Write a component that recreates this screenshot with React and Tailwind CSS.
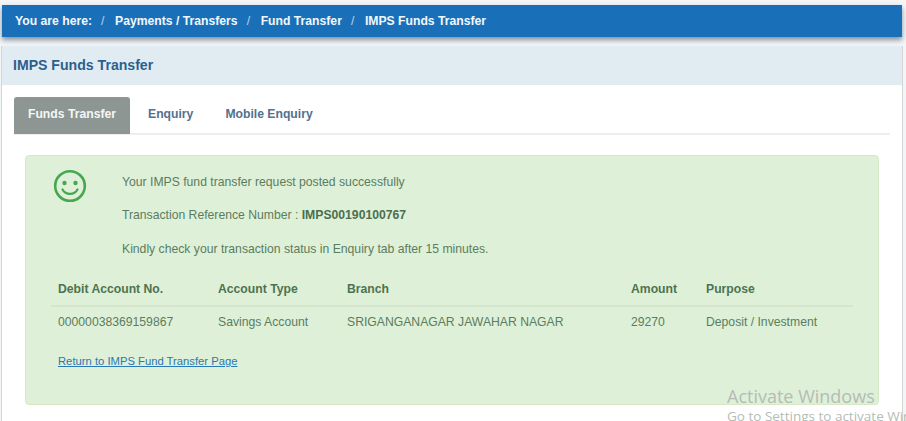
const TABLE_HEADERS = [
  { label: "Debit Account No.", width: "w-[160px]" },
  { label: "Account Type", width: "w-[129px]" },
  { label: "Branch", width: "w-[284px]" },
  { label: "Amount", width: "w-[75px]" },
  { label: "Purpose", width: "flex-1" },
];

const TABLE_VALUES = [
  { label: "00000038369159867", width: "w-[160px]" },
  { label: "Savings Account", width: "w-[129px]" },
  { label: "SRIGANGANAGAR JAWAHAR NAGAR", width: "w-[284px]" },
  { label: "29270", width: "w-[75px]" },
  { label: "Deposit / Investment", width: "flex-1" },
];

function Smiley() {
  return (
    <svg width="34" height="34" viewBox="0 0 34 34" fill="none" className="shrink-0">
      <circle cx="17" cy="17" r="14.8" stroke="#45a84f" strokeWidth="2.6" />
      <circle cx="11.5" cy="14" r="2.2" fill="#45a84f" />
      <circle cx="22.5" cy="14" r="2.2" fill="#45a84f" />
      <path d="M9.5 20.500c1.600 3 4.200 4.400 7.500 4.400s5.900-1.400 7.500-4.400" stroke="#45a84f" strokeWidth="2.200" strokeLinecap="round" />
    </svg>
  );
}

function Breadcrumb() {
  const items = ["Payments / Transfers", "Fund Transfer", "IMPS Funds Transfer"];
  return (
    <div className="ml-[2px] mr-[4px] flex h-[32px] items-center bg-[#1a70b8] pl-[13px] text-[12.2px] font-bold text-[#f2f7fb] shadow-[0_3px_5px_rgba(40,60,80,0.55)]">
      <span>You are here:</span>
      {items.map((item) => (
        <span key={item} className="flex items-center">
          <span className="w-[23px] pl-[9px] font-normal text-[#b9d3ea]">/</span>
          <span>{item}</span>
        </span>
      ))}
    </div>
  );
}

function Tabs() {
  return (
    <div className="mx-[12px] mt-[12px] flex h-[38px] border-b-2 border-[#eeeeee] text-[12.2px] font-bold">
      <div className="flex h-[37px] w-[116px] items-center justify-center rounded-t-[3px] bg-[#8d9693] pb-[2px] text-[#f4f6f5]">
        Funds Transfer
      </div>
      <div className="flex h-[37px] items-center pb-[2px] pl-[18px] text-[#53718f]">Enquiry</div>
      <div className="flex h-[37px] items-center pb-[2px] pl-[32px] text-[#53718f]">Mobile Enquiry</div>
    </div>
  );
}

function SuccessAlert() {
  return (
    <div className="mx-[23px] mt-[20px] h-[250px] rounded-[4px] border border-[#d6e9c6] bg-[#dff0d8] text-[12.2px] text-[#5a7d5f]">
      <div className="flex pl-[27px] pt-[13px]">
        <Smiley />
        <div className="pl-[35px] pt-[6px]">
          <p className="leading-[14px]">Your IMPS fund transfer request posted successfully</p>
          <p className="mt-[19px] leading-[14px]">
            Transaction Reference Number : <strong className="font-bold text-[#4b6e50]">IMPS00190100767</strong>
          </p>
          <p className="mt-[20px] leading-[14px]">Kindly check your transaction status in Enquiry tab after 15 minutes.</p>
        </div>
      </div>

      <div className="mx-[25px] mt-[15px]">
        <div className="flex h-[36px] items-center border-b-2 border-[#d5e5ce] pl-[7px] pt-[3px] font-bold text-[#4d7450]">
          {TABLE_HEADERS.map((col) => (
            <div key={col.label} className={col.width}>{col.label}</div>
          ))}
        </div>
        <div className="flex h-[31px] items-center pl-[7px]">
          {TABLE_VALUES.map((col) => (
            <div key={col.label} className={col.width}>{col.label}</div>
          ))}
        </div>
        <a href="#" className="ml-[7px] mt-[16px] inline-block text-[11.25px] leading-[14px] text-[#2a78b4] underline">
          Return to IMPS Fund Transfer Page
        </a>
      </div>
    </div>
  );
}

export default function App() {
  return (
    <div className="relative h-[421px] w-[906px] overflow-hidden bg-[#f3f5f7] pt-[5px] font-['Liberation_Sans',Arial,sans-serif]">
      <Breadcrumb />
      <div className="ml-[1px] mr-[3px] mt-[9px] h-[375px] border-x border-[#d4d4d4] bg-white">
        <div className="flex h-[39px] items-center bg-[#e0ecf2] pl-[11px] text-[14.1px] font-bold text-[#2b5f8f]">
          IMPS Funds Transfer
        </div>
        <Tabs />
        <SuccessAlert />
      </div>

      {/* Windows watermark sits on top of the page */}
      <div className="absolute left-[727px] top-[386px] whitespace-nowrap font-['Open_Sans',sans-serif] text-[#b4bcb6]">
        <div className="text-[18px] leading-[20px]">Activate Windows</div>
        <div className="mt-[1px] text-[13.5px] leading-[18px]">Go to Settings to activate Windows.</div>
      </div>
    </div>
  );
}
